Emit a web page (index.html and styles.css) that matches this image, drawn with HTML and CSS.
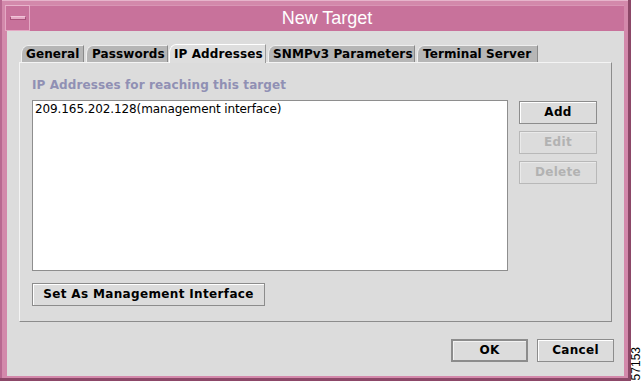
FILE: index.html
```html
<!DOCTYPE html>
<html>
<head>
<meta charset="utf-8">
<link rel="stylesheet" href="styles.css">
</head>
<body>
<div class="window">
  <div class="titlebar">
    <div class="menu-btn"><span class="dash"></span></div>
    <div class="title">New Target</div>
  </div>
  <div class="content">
    <div class="tabs">
      <div class="tab t1">General</div>
      <div class="tab t2">Passwords</div>
      <div class="tab t3 selected">IP Addresses</div>
      <div class="tab t4">SNMPv3 Parameters</div>
      <div class="tab t5">Terminal Server</div>
    </div>
    <div class="panel">
      <div class="label">IP Addresses for reaching this target</div>
      <div class="list-row">
        <div class="list">
          <div class="item">209.165.202.128(management interface)</div>
        </div>
        <div class="side-btns">
          <div class="btn side">Add</div>
          <div class="btn side disabled">Edit</div>
          <div class="btn side disabled">Delete</div>
        </div>
      </div>
      <div class="btn mgmt">Set As Management Interface</div>
    </div>
    <div class="footer">
      <div class="btn foot default">OK</div>
      <div class="btn foot">Cancel</div>
    </div>
  </div>
</div>
<div class="caption"><span>57153</span></div>
</body>
</html>
```
FILE: styles.css
```css
html, body {
  margin: 0;
  padding: 0;
  background: #ffffff;
}
body {
  display: flex;
  width: 642px;
  height: 381px;
  overflow: hidden;
}
.window {
  box-sizing: border-box;
  width: 631px;
  height: 381px;
  background: #d389ab;
  border-right: 3px solid #8c4868;
  border-bottom: 3px solid #8c4868;
  padding: 5px 4px 2px 5px;
  display: flex;
  flex-direction: column;
  box-shadow: inset 2px 0 0 #b86890, inset 0 1px 0 #e6b4cb;
}
.titlebar {
  height: 26px;
  background: #c8729b;
  display: flex;
  align-items: stretch;
  flex: none;
  box-shadow: inset 0 1px 0 #d995b5;
}
.menu-btn {
  box-sizing: border-box;
  width: 25px;
  border: 1px solid #e4a9c4;
  border-top-color: #e8b4cc;
  display: flex;
  align-items: center;
  justify-content: center;
}
.dash {
  display: block;
  width: 14px;
  height: 2px;
  background: #e6a8c4;
  border: 1px solid #a9527b;
  border-top-color: #f0c5d8;
}
.title {
  flex: 1;
  text-align: center;
  color: #ffffff;
  font-family: "Liberation Sans", Arial, sans-serif;
  font-size: 18px;
  line-height: 26px;
}
.content {
  flex: 1;
  margin-left: 2px;
  background: #dcdcdc;
  display: flex;
  flex-direction: column;
  font-family: "DejaVu Sans", sans-serif;
  font-size: 12px;
  font-weight: bold;
  color: #000;
}
.tabs {
  display: flex;
  align-items: flex-end;
  margin-top: 13px;
  padding-left: 14px;
  height: 18px;
  position: relative;
  z-index: 1;
}
.tab {
  box-sizing: border-box;
  height: 17px;
  line-height: 16px;
  background: #b6b6b6;
  border: 1px solid #efefef;
  border-right-color: #8a8a8a;
  border-bottom: none;
  border-top-left-radius: 7px 9px;
  padding-left: 4px;
  margin-right: 2px;
  white-space: nowrap;
  letter-spacing: 0.1px;
}
.tab.t1 { width: 63px; }
.tab.t2 { width: 82px; margin-right: 1px; padding-left: 5px; }
.tab.t3 { width: 97px; margin-right: 2px; }
.tab.t4 { width: 147px; }
.tab.t5 { width: 121px; padding-left: 5px; }
.tab.selected {
  height: 19px;
  background: #dedede;
  line-height: 18px;
  margin-bottom: -1px;
  border-color: #ffffff;
  border-right-color: #9a9a9a;
}
.panel {
  box-sizing: border-box;
  margin-left: 12px;
  width: 593px;
  height: 260px;
  border: 1px solid #f4f4f4;
  border-right-color: #8c8c8c;
  border-bottom-color: #8c8c8c;
  padding: 15px 0 0 12px;
  display: flex;
  flex-direction: column;
}
.label {
  color: #9090b4;
  height: 14px;
  line-height: 14px;
  letter-spacing: 0.1px;
}
.list-row {
  display: flex;
  margin-top: 8px;
}
.list {
  box-sizing: border-box;
  width: 476px;
  height: 171px;
  background: #ffffff;
  border: 1px solid #8e8e8e;
  padding: 1px 2px;
}
.item {
  font-weight: normal;
  line-height: 14px;
  letter-spacing: -0.1px;
}
.side-btns {
  display: flex;
  flex-direction: column;
  gap: 7px;
  margin-left: 11px;
  margin-top: 1px;
}
.btn {
  box-sizing: border-box;
  height: 23px;
  line-height: 21px;
  text-align: center;
  background: #dcdcdc;
  border: 1px solid #8c8c8c;
  box-shadow: inset 1px 1px 0 #ffffff;
  letter-spacing: 0.3px;
}
.btn.side { width: 78px; }
.btn.disabled {
  color: #b2b2b2;
  border-color: #b8b8b8;
  box-shadow: inset 1px 1px 0 #eaeaea;
}
.btn.mgmt {
  width: 233px;
  margin-top: 12px;
  letter-spacing: 0.35px;
}
.footer {
  display: flex;
  justify-content: flex-end;
  gap: 9px;
  margin-top: 17px;
  margin-right: 10px;
}
.btn.foot { width: 77px; }
.btn.default {
  border: 2px solid #8c8c8c;
  line-height: 19px;
  box-shadow: inset 1px 1px 0 #f2f2f2;
}
.caption {
  flex: 1;
  display: flex;
  align-items: flex-end;
  justify-content: center;
  padding-bottom: 1px;
}
.caption span {
  writing-mode: vertical-rl;
  transform: rotate(180deg);
  font-family: "Liberation Sans", Arial, sans-serif;
  font-size: 12px;
  line-height: 11px;
  color: #000;
}
```
